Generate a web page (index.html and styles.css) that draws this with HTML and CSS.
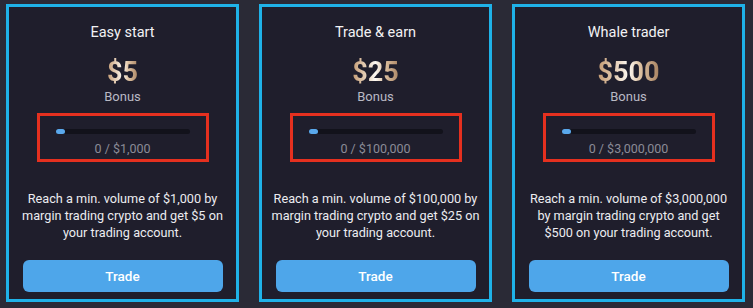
FILE: index.html
```html
<!DOCTYPE html>
<html>
<head>
<meta charset="utf-8">
<link rel="stylesheet" href="styles.css">
</head>
<body>
<div class="row">
  <div class="card">
    <div class="title">Easy start</div>
    <div class="amount">$5</div>
    <div class="bonus">Bonus</div>
    <div class="progress-box">
      <div class="track"><div class="fill"></div></div>
      <div class="count">0 / $1,000</div>
    </div>
    <p class="desc">Reach a min. volume of $1,000 by margin trading crypto and get $5 on your trading account.</p>
    <button class="btn">Trade</button>
  </div>
  <div class="card">
    <div class="title">Trade &amp; earn</div>
    <div class="amount">$25</div>
    <div class="bonus">Bonus</div>
    <div class="progress-box">
      <div class="track"><div class="fill"></div></div>
      <div class="count">0 / $100,000</div>
    </div>
    <p class="desc">Reach a min. volume of $100,000 by margin trading crypto and get $25 on your trading account.</p>
    <button class="btn">Trade</button>
  </div>
  <div class="card">
    <div class="title">Whale trader</div>
    <div class="amount">$500</div>
    <div class="bonus">Bonus</div>
    <div class="progress-box">
      <div class="track"><div class="fill"></div></div>
      <div class="count">0 / $3,000,000</div>
    </div>
    <p class="desc">Reach a min. volume of $3,000,000 by margin trading crypto and get $500 on your trading account.</p>
    <button class="btn">Trade</button>
  </div>
</div>
</body>
</html>
```

FILE: styles.css
```css
html, body {
  margin: 0;
  padding: 0;
  background: #2a2a36;
  font-family: Roboto, "Liberation Sans", sans-serif;
}
.row {
  display: flex;
  gap: 20px;
  padding: 4px 0 0 6px;
}
.card {
  box-sizing: border-box;
  width: 233px;
  height: 298px;
  border: 3px solid #1fb2e8;
  background: #1f1e2c;
  display: flex;
  flex-direction: column;
  align-items: center;
  padding: 17px 0 0;
}
.title {
  color: #f2f2f4;
  font-size: 14.5px;
  line-height: 18px;
}
.amount {
  margin-top: 16px;
  font-size: 27px;
  font-weight: 700;
  line-height: 28px;
  background: linear-gradient(90deg, #c39a72 0%, #ecdac6 35%, #fdf9f4 50%, #e0c4a4 68%, #a98463 100%);
  -webkit-background-clip: text;
  background-clip: text;
  color: transparent;
}
.bonus {
  margin-top: 3px;
  color: #b9b9c4;
  font-size: 13px;
  line-height: 16px;
}
.progress-box {
  box-sizing: border-box;
  margin-top: 8px;
  width: 172px;
  height: 49px;
  border: 3px solid #e5301f;
  display: flex;
  flex-direction: column;
  align-items: center;
  padding-top: 13px;
}
.track {
  width: 134px;
  height: 5px;
  border-radius: 3px;
  background: #12121b;
}
.fill {
  width: 9px;
  height: 5px;
  border-radius: 3px;
  background: #5aa8ec;
}
.count {
  margin-top: 7px;
  color: #8b8b97;
  font-size: 12.5px;
  line-height: 15px;
}
.desc {
  margin: 28px 0 0;
  padding: 0 8px;
  color: #ececf0;
  font-size: 12.7px;
  line-height: 17px;
  text-align: center;
}
.btn {
  margin-top: auto;
  margin-bottom: 7px;
  width: 200px;
  height: 32px;
  border: none;
  border-radius: 6px;
  background: #4ea6ea;
  color: #ffffff;
  font-family: Roboto, "Liberation Sans", sans-serif;
  font-size: 13.5px;
  font-weight: 500;
}
```
